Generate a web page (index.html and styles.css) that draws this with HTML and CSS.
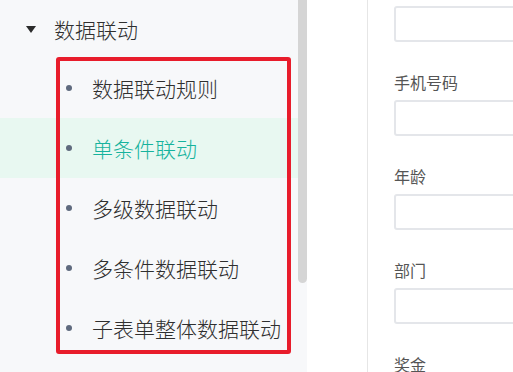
FILE: index.html
```html
<!DOCTYPE html>
<html lang="zh-CN">
<head>
  <meta charset="UTF-8">
  <title>数据联动</title>
  <link rel="stylesheet" href="styles.css">
</head>
<body>

  <div class="page">
    <aside class="sidebar">
      <nav class="menu">
        <div class="menu-title">
          <span class="caret"></span>
          <span>数据联动</span>
        </div>
        <ul class="submenu">
          <li class="item"><span class="dot"></span>数据联动规则</li>
          <li class="item active"><span class="dot"></span>单条件联动</li>
          <li class="item"><span class="dot"></span>多级数据联动</li>
          <li class="item"><span class="dot"></span>多条件数据联动</li>
          <li class="item"><span class="dot"></span>子表单整体数据联动</li>
        </ul>
      </nav>
      <div class="thumb"></div>
      <div class="mark"></div>
    </aside>

    <div class="spacer"></div>

    <main class="main">
      <form class="form">
        <div class="field first">
          <input type="text">
        </div>
        <div class="field">
          <label>手机号码</label>
          <input type="text">
        </div>
        <div class="field">
          <label>年龄</label>
          <input type="text">
        </div>
        <div class="field">
          <label>部门</label>
          <input type="text">
        </div>
        <div class="field">
          <label>奖金</label>
          <input type="text">
        </div>
      </form>
    </main>
  </div>

</body>
</html>
```

FILE: styles.css
```css
html, body {
  margin: 0;
  padding: 0;
  background: #fff;
}
body {
  font-family: "Noto Sans CJK SC", "Noto Sans", sans-serif;
  color: #2f2f2f;
}
.page {
  display: flex;
  height: 372px;
  overflow: hidden;
}

/* left menu */
.sidebar {
  position: relative;
  display: flex;
  width: 307px;
  flex-shrink: 0;
  background: #f7f8fa;
}
.menu {
  flex: 1;
}
.menu-title {
  display: flex;
  align-items: center;
  height: 58px;
  padding-left: 26px;
  gap: 18px;
  font-size: 21px;
  font-weight: 300;
}
.caret {
  width: 0;
  height: 0;
  border-left: 5.5px solid transparent;
  border-right: 5.5px solid transparent;
  border-top: 7px solid #2b2b2b;
}
.submenu {
  list-style: none;
  margin: 0;
  padding: 0;
}
.item {
  display: flex;
  align-items: center;
  height: 60px;
  padding-left: 66px;
  gap: 20px;
  font-size: 21px;
  font-weight: 300;
}
.item.active {
  background: #e8f8f1;
  color: #16b39d;
}
.dot {
  width: 6px;
  height: 6px;
  border-radius: 50%;
  background: #5f6a7e;
}
.thumb {
  width: 9px;
  height: 283px;
  background: #d5d5d5;
  border-radius: 0 0 5px 5px;
}
.mark {
  position: absolute;
  left: 56px;
  top: 57px;
  width: 227px;
  height: 289px;
  border: 4px solid #e81c2b;
  border-radius: 3px;
}

.spacer {
  width: 60px;
  flex-shrink: 0;
}

/* form */
.main {
  flex: 1;
  border-left: 1px solid #e6e6e6;
  padding-left: 26px;
}
.form {
  padding-top: 6px;
}
.field {
  display: flex;
  flex-direction: column;
  margin-bottom: 29px;
}
.field label {
  height: 22px;
  line-height: 22px;
  margin-bottom: 7px;
  font-size: 16px;
  color: #555;
}
.field input {
  width: 300px;
  height: 36px;
  box-sizing: border-box;
  border: 2px solid #e4e6ea;
  border-radius: 3px;
  background: #fff;
}
```
